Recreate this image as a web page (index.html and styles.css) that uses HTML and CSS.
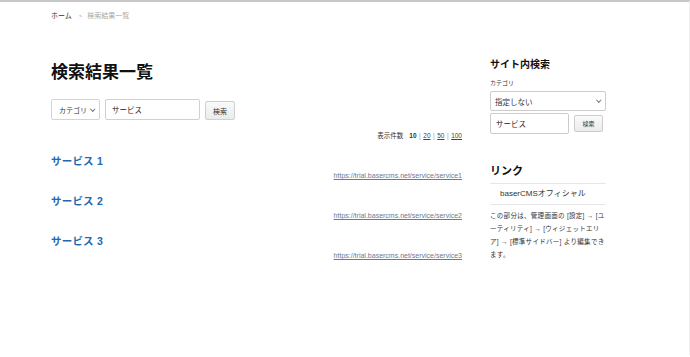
FILE: index.html
```html
<!DOCTYPE html>
<html lang="ja">
<head>
<meta charset="utf-8">
<title>検索結果一覧</title>
<link rel="stylesheet" href="styles.css">
</head>
<body>
<div class="page">
  <nav class="crumbs"><a class="crumb-home">ホーム</a><span class="crumb-sep">&gt;</span><span class="crumb-cur">検索結果一覧</span></nav>
  <div class="layout">
    <main class="main">
      <h1 class="title">検索結果一覧</h1>
      <form class="search">
        <div class="sel">カテゴリ<span class="chev"></span></div>
        <div class="field">サービス</div>
        <div class="btn">検索</div>
      </form>
      <div class="perpage">表示件数<b>10</b><span class="bar">|</span><u>20</u><span class="bar">|</span><u>50</u><span class="bar">|</span><u>100</u></div>
      <div class="result">
        <a class="rtitle">サービス 1</a>
        <a class="rurl">https://trial.basercms.net/service/service1</a>
      </div>
      <div class="result">
        <a class="rtitle">サービス 2</a>
        <a class="rurl">https://trial.basercms.net/service/service2</a>
      </div>
      <div class="result">
        <a class="rtitle">サービス 3</a>
        <a class="rurl">https://trial.basercms.net/service/service3</a>
      </div>
    </main>
    <aside class="side">
      <h2 class="stitle">サイト内検索</h2>
      <div class="slabel">カテゴリ</div>
      <div class="ssel">指定しない<span class="chev"></span></div>
      <div class="srow">
        <div class="sfield">サービス</div>
        <div class="sbtn">検索</div>
      </div>
      <h2 class="stitle links">リンク</h2>
      <ul class="linklist"><li>baserCMSオフィシャル</li></ul>
      <p class="note">この部分は、管理画面の [設定] → [ユーティリティ] → [ウィジェットエリア] → [標準サイドバー] より編集できます。</p>
    </aside>
  </div>
</div>
</body>
</html>
```

FILE: styles.css
```css
html, body { margin: 0; padding: 0; background: #fff; }
body {
  font-family: "Liberation Sans", "Noto Sans CJK JP", sans-serif;
  color: #222;
  border-top: 2px solid #c8c8c8;
  border-right: 1px solid #eee;
  height: 355px;
  box-sizing: border-box;
}
.page { padding: 0 0 0 51px; }
.crumbs { font-size: 7px; line-height: 10px; padding-top: 9px; color: #333; display: flex; align-items: center; }
.crumb-home { color: #333; }
.crumb-sep { color: #aaa; margin: 0 5px 0 7px; font-size: 6px; }
.crumb-cur { color: #aaa; }
.layout { display: flex; gap: 28px; }
.main { width: 411px; }
.title { font-size: 17px; font-weight: bold; margin: 40px 0 0; line-height: 24px; color: #111; }
.search { display: flex; align-items: center; margin-top: 14px; gap: 5px; }
.sel, .field, .btn, .ssel, .sfield, .sbtn { box-sizing: border-box; font-size: 7.5px; display: flex; align-items: center; white-space: nowrap; }
.sel { width: 49px; height: 21px; border: 1px solid #d4d4d4; border-radius: 2px; padding: 0 5px 0 7px; justify-content: space-between; color: #333; font-size: 7px; }
.chev { width: 2.5px; height: 2.5px; border-right: 1px solid #777; border-bottom: 1px solid #777; transform: rotate(45deg); margin-top: -2px; flex: none; }
.field { width: 95px; height: 21px; border: 1px solid #d0d0d0; border-radius: 2px; padding-left: 6px; color: #222; }
.btn { width: 30px; height: 19px; border: 1px solid #d0d0d0; border-radius: 2px; background: linear-gradient(#fafafa, #ebebeb); justify-content: center; font-size: 7px; color: #333; margin-top: 2px; }
.perpage { text-align: right; font-size: 6.5px; margin-top: 11px; line-height: 10px; color: #333; }
.perpage b { margin-left: 6px; }
.perpage u { color: #444; }
.bar { color: #999; margin: 0 2.5px; }
.result { display: flex; flex-direction: column; }
.rtitle { color: #2468b2; font-size: 10.5px; font-weight: 600; line-height: 14px; margin-top: 13px; letter-spacing: 0.2px; }
.result + .result .rtitle { margin-top: 13px; }
.rurl { align-self: flex-end; font-size: 7px; color: #6b7a90; text-decoration: underline; line-height: 10px; margin-top: 3px; }
.side { width: 116px; }
.stitle { font-size: 10px; font-weight: bold; margin: 37px 0 0; line-height: 14px; color: #111; }
.slabel { font-size: 6px; margin-top: 7px; line-height: 9px; color: #333; }
.ssel { margin-top: 3px; width: 116px; height: 20px; border: 1px solid #ccc; border-radius: 2px; padding: 0 5px 0 4px; justify-content: space-between; color: #333; }
.srow { display: flex; align-items: center; gap: 5px; margin-top: 2px; }
.sfield { width: 79px; height: 21px; border: 1px solid #ccc; border-radius: 2px; padding-left: 5px; }
.sbtn { width: 29px; height: 17px; border: 1px solid #ccc; border-radius: 2px; background: linear-gradient(#fafafa, #ececec); justify-content: center; font-size: 6px; color: #333; }
.stitle.links { margin-top: 30px; font-size: 11px; }
.linklist { list-style: none; margin: 5px 0 0; padding: 0; border-top: 1px solid #e6e6e6; border-bottom: 1px solid #e6e6e6; }
.linklist li { font-size: 8px; line-height: 20px; padding-left: 10px; color: #333; }
.note { font-size: 6.5px; line-height: 13px; margin: 4px 0 0; color: #333; letter-spacing: 0.3px; }
```
